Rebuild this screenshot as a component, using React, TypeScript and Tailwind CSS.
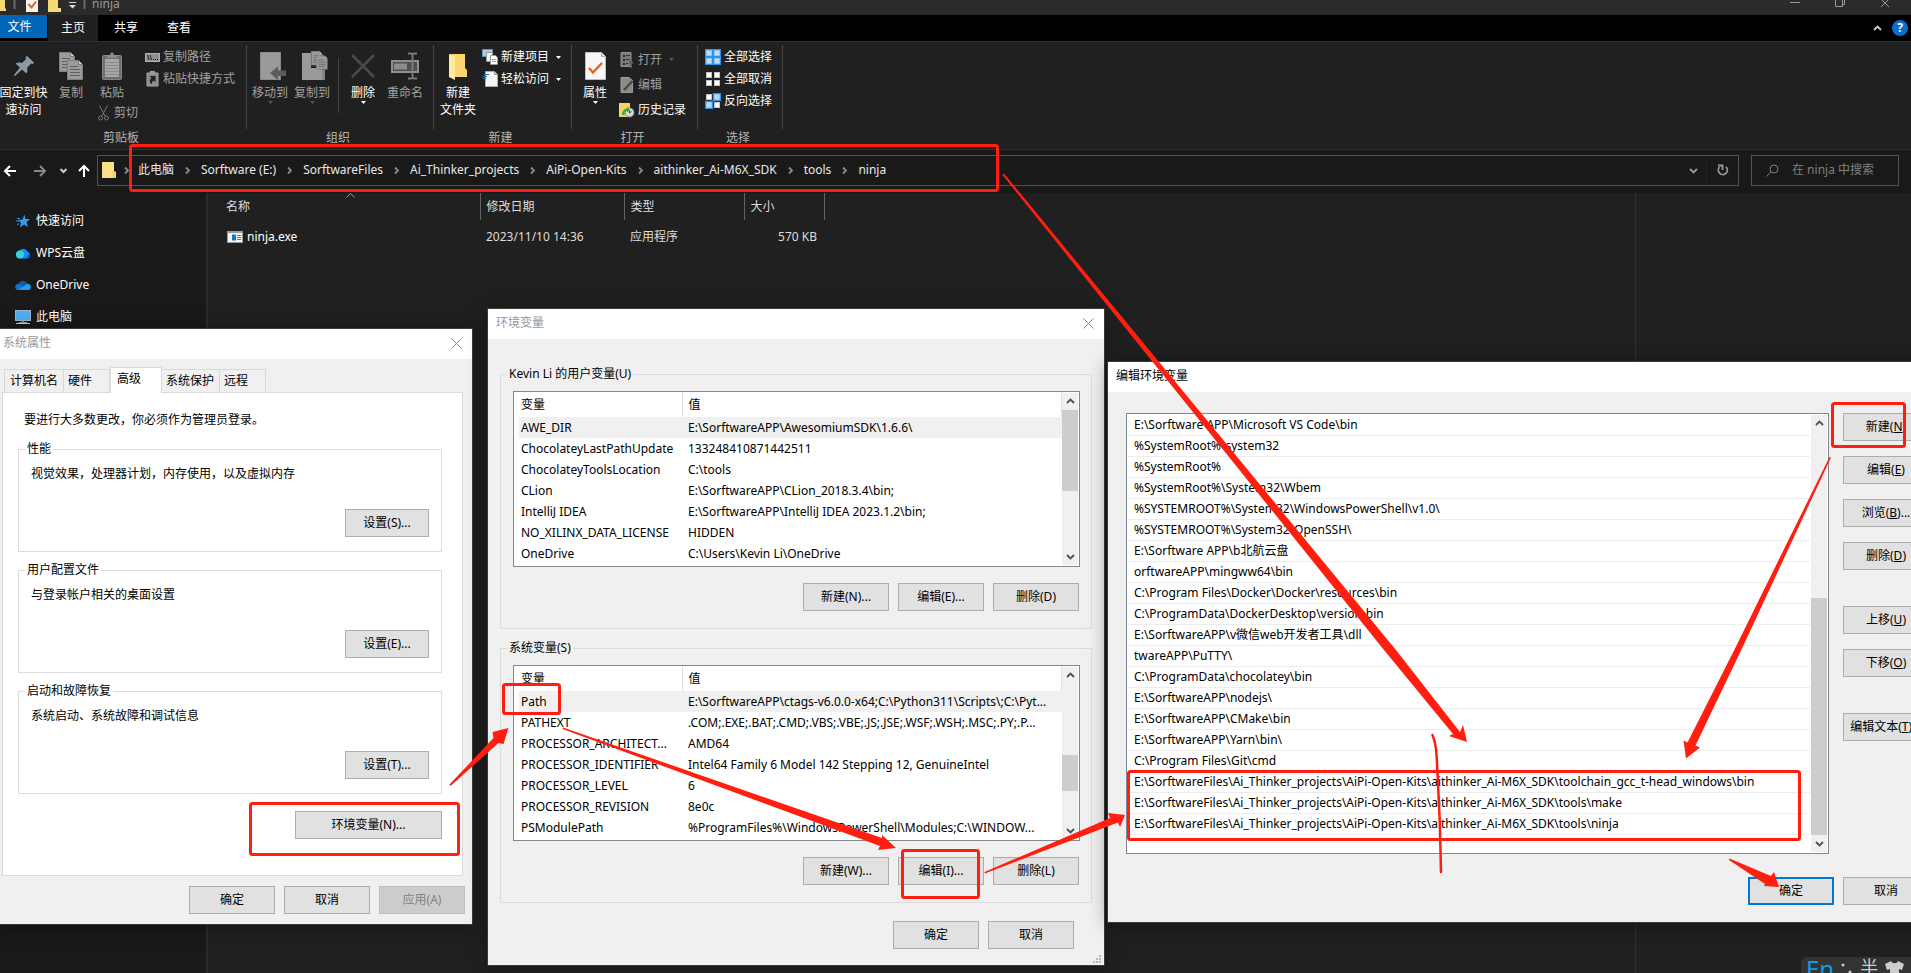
import type { ReactNode } from "react";

interface EnvVar {
  name: string;
  value: string;
}

const userVars: EnvVar[] = [
  { name: "AWE_DIR", value: "E:\\SorftwareAPP\\AwesomiumSDK\\1.6.6\\" },
  { name: "ChocolateyLastPathUpdate", value: "133248410871442511" },
  { name: "ChocolateyToolsLocation", value: "C:\\tools" },
  { name: "CLion", value: "E:\\SorftwareAPP\\CLion_2018.3.4\\bin;" },
  { name: "IntelliJ IDEA", value: "E:\\SorftwareAPP\\IntelliJ IDEA 2023.1.2\\bin;" },
  { name: "NO_XILINX_DATA_LICENSE", value: "HIDDEN" },
  { name: "OneDrive", value: "C:\\Users\\Kevin Li\\OneDrive" },
];

const systemVars: EnvVar[] = [
  { name: "Path", value: "E:\\SorftwareAPP\\ctags-v6.0.0-x64;C:\\Python311\\Scripts\\;C:\\Pyt..." },
  { name: "PATHEXT", value: ".COM;.EXE;.BAT;.CMD;.VBS;.VBE;.JS;.JSE;.WSF;.WSH;.MSC;.PY;.P..." },
  { name: "PROCESSOR_ARCHITECT...", value: "AMD64" },
  { name: "PROCESSOR_IDENTIFIER", value: "Intel64 Family 6 Model 142 Stepping 12, GenuineIntel" },
  { name: "PROCESSOR_LEVEL", value: "6" },
  { name: "PROCESSOR_REVISION", value: "8e0c" },
  { name: "PSModulePath", value: "%ProgramFiles%\\WindowsPowerShell\\Modules;C:\\WINDOW..." },
];

const pathEntries = [
  "E:\\Sorftware APP\\Microsoft VS Code\\bin",
  "%SystemRoot%\\system32",
  "%SystemRoot%",
  "%SystemRoot%\\System32\\Wbem",
  "%SYSTEMROOT%\\System32\\WindowsPowerShell\\v1.0\\",
  "%SYSTEMROOT%\\System32\\OpenSSH\\",
  "E:\\Sorftware APP\\b北航云盘",
  "orftwareAPP\\mingww64\\bin",
  "C:\\Program Files\\Docker\\Docker\\resources\\bin",
  "C:\\ProgramData\\DockerDesktop\\version-bin",
  "E:\\SorftwareAPP\\v微信web开发者工具\\dll",
  "twareAPP\\PuTTY\\",
  "C:\\ProgramData\\chocolatey\\bin",
  "E:\\SorftwareAPP\\nodejs\\",
  "E:\\SorftwareAPP\\CMake\\bin",
  "E:\\SorftwareAPP\\Yarn\\bin\\",
  "C:\\Program Files\\Git\\cmd",
  "E:\\SorftwareFiles\\Ai_Thinker_projects\\AiPi-Open-Kits\\aithinker_Ai-M6X_SDK\\toolchain_gcc_t-head_windows\\bin",
  "E:\\SorftwareFiles\\Ai_Thinker_projects\\AiPi-Open-Kits\\aithinker_Ai-M6X_SDK\\tools\\make",
  "E:\\SorftwareFiles\\Ai_Thinker_projects\\AiPi-Open-Kits\\aithinker_Ai-M6X_SDK\\tools\\ninja",
];

const crumbs = [
  "此电脑",
  "Sorftware (E:)",
  "SorftwareFiles",
  "Ai_Thinker_projects",
  "AiPi-Open-Kits",
  "aithinker_Ai-M6X_SDK",
  "tools",
  "ninja",
];

/* ---------- small glyphs ---------- */

function DownArrow({ className = "" }: { className?: string }) {
  return (
    <svg width="5" height="3" viewBox="0 0 5 3" className={className}>
      <path d="M0 0h5L2.5 3z" fill="currentColor" />
    </svg>
  );
}

function Chevron({ dir }: { dir: "up" | "down" | "right" }) {
  const d = { up: "M1 6l3.5-3.5L8 6", down: "M1 3l3.5 3.5L8 3", right: "M3 1.500l3 3-3 3" }[dir];
  return (
    <svg width="9" height="9" viewBox="0 0 9 9" fill="none" stroke="currentColor" strokeWidth="1.8">
      <path d={d} />
    </svg>
  );
}

function CloseX() {
  return (
    <svg width="11" height="11" viewBox="0 0 11 11" stroke="currentColor" fill="none">
      <path d="M.5.5l10 10M10.500.5l-10 10" />
    </svg>
  );
}

/* ---------- ribbon icons ---------- */

function PinIcon() {
  return (
    <svg width="22" height="22" viewBox="0 0 22 22" fill="#8e9aa3">
      <path d="M14 1l7 6.500-1 1.500-2-.5-4 4.500c.8 2 .5 4-.7 5.500L9 14.500 2 21l-1-.2.2-1L7 12.500 2.500 8.500C4.500 7.500 7 7 9 8l4-4-.5-2z" />
    </svg>
  );
}

function PageLines({ x, y }: { x: number; y: number }) {
  return (
    <g transform={`translate(${x} ${y})`}>
      <path d="M.5.5h11l4 4v15H.5z" fill="#9b9b9b" stroke="#7d7d7d" />
      <path d="M3 6.500h8M3 9.500h10M3 12.500h10M3 15.500h10" stroke="#5f5f5f" />
      <path d="M11.500.5v4h4" fill="#cfcfcf" stroke="#7d7d7d" />
    </g>
  );
}

function CopyIcon() {
  return (
    <svg width="24" height="28" viewBox="0 0 24 28">
      <PageLines x={0} y={0} />
      <PageLines x={8} y={8} />
    </svg>
  );
}

function PasteIcon() {
  return (
    <svg width="20" height="28" viewBox="0 0 20 28">
      <rect x=".5" y="3.500" width="19" height="24" rx="1" fill="#6e6e6e" stroke="#858585" />
      <rect x="3" y="7" width="14" height="18" fill="#a6a6a6" />
      <path d="M4 10.500h12M4 13.500h12M4 16.500h12M4 19.500h12M4 22.500h12" stroke="#8a8a8a" />
      <path d="M5 6V3h3l1-2.500h2L12 3h3v3z" fill="#8a8a8a" />
    </svg>
  );
}

function CutIcon() {
  return (
    <svg width="11" height="16" viewBox="0 0 11 16" fill="none" stroke="#777">
      <path d="M1.500.5L7 11M9.500.5L4 11" />
      <circle cx="2.500" cy="13" r="2" />
      <circle cx="8.500" cy="13" r="2" />
    </svg>
  );
}

function CopyPathIcon() {
  return (
    <svg width="15" height="9" viewBox="0 0 15 9">
      <rect x=".5" y=".5" width="14" height="8" fill="#8f8f8f" stroke="#b0b0b0" />
      <path d="M2.500 2l1.500 5M5 2l1.500 5" stroke="#222" />
      <path d="M8 6.500h1M10 6.500h1M12 6.500h1" stroke="#222" />
    </svg>
  );
}

function ShortcutIcon() {
  return (
    <svg width="13" height="16" viewBox="0 0 13 16">
      <path d="M1 2h11v13H1z" fill="#8b8b8b" stroke="#a5a5a5" />
      <rect x="4" y="0" width="5" height="3" fill="#9b9b9b" />
      <path d="M3.500 5h6v6L7.500 9.500C6 10.500 6 11.500 6 13 3 11.500 3.500 9 5.500 7z" fill="#222" />
    </svg>
  );
}

function MoveToIcon() {
  return (
    <svg width="32" height="28" viewBox="-6 0 32 28">
      <path d="M.5.5h20v27H.5z" fill="#9a9a9a" stroke="#8a8a8a" />
      <path d="M10 21l8-6.500v4h8v5.500h-8v4z" fill="#5c5c5c" />
    </svg>
  );
}

function CopyToIcon() {
  return (
    <svg width="32" height="30" viewBox="-6 0 32 30">
      <path d="M0 2h9v15h11v12H0z" fill="#9a9a9a" />
      <g transform="translate(9 0) scale(.72)">
        <PageLines x={0} y={0} />
        <PageLines x={7} y={6} />
      </g>
      <path d="M20 19h3v10h-3z" fill="#858585" />
    </svg>
  );
}

function DeleteIcon() {
  return (
    <svg width="24" height="28" viewBox="0 0 24 28" stroke="#4b4b4b" strokeWidth="2.500">
      <path d="M1 3l22 22M23 3L1 25" />
    </svg>
  );
}

function RenameIcon() {
  return (
    <svg width="28" height="28" viewBox="0 0 28 28" fill="none">
      <rect x="1" y="9" width="26" height="11" fill="#4f4f4f" stroke="#8e8e8e" strokeWidth="2" />
      <rect x="3" y="11.500" width="13" height="6" fill="#8e8e8e" />
      <path d="M17 1.500h2.500c1 0 2 .6 2 1.500v22c0 .9-1 1.500-2 1.500H17M26 1.500h-2.500c-1 0-2 .6-2 1.500M26 26.500h-2.500c-1 0-2-.6-2-1.500" stroke="#7c7c7c" strokeWidth="1.800" />
    </svg>
  );
}

function BigFolderIcon() {
  return (
    <svg width="18" height="28" viewBox="0 0 18 28">
      <path d="M1 2h15v14l2 2v7H5z" fill="#f9d76e" />
      <path d="M0 2l6 3v23l-6-3z" fill="#fde9a2" />
    </svg>
  );
}

function NewItemIcon() {
  return (
    <svg width="16" height="16" viewBox="0 0 16 16">
      <rect x=".5" y=".5" width="10" height="7" fill="#a9cfe8" stroke="#5b95b8" />
      <path d="M4.500 3.500h6v9h-6z" fill="#f2f2f2" stroke="#999" />
      <path d="M8.500 6.500h5l2 2v7h-7z" fill="#fff" stroke="#999" />
      <path d="M10 10.500h4M10 12.500h4" stroke="#b58fd0" />
    </svg>
  );
}

function EasyAccessIcon() {
  return (
    <svg width="16" height="16" viewBox="0 0 16 16">
      <path d="M3.500.5h9l3 3v12h-12z" fill="#f5f5f5" stroke="#aaa" />
      <path d="M2 3.500h5M0 5.500h5M1 7.500h3" stroke="#2f6fb3" />
      <path d="M12.500.5v3h3" fill="#ccc" stroke="#999" />
    </svg>
  );
}

function PropertiesIcon() {
  return (
    <svg width="21" height="28" viewBox="0 0 21 28">
      <path d="M.5.500h16l4 4v23H.5z" fill="#f7f7f7" stroke="#bdbdbd" />
      <path d="M16.500.5v4h4" fill="#ddd" stroke="#aaa" />
      <path d="M4 16l4 4.500 9-9.500" fill="none" stroke="#e8631c" strokeWidth="2.500" />
    </svg>
  );
}

function OpenIcon() {
  return (
    <svg width="14" height="16" viewBox="0 0 14 16">
      <path d="M1 .5h10v14H1z" fill="#7b7b7b" stroke="#8f8f8f" />
      <path d="M3 3h2v2H3zM3 7h2v2H3zM3 11h2v2H3z" fill="#2a2a2a" />
      <path d="M6 3.500h4M6 7.500h4M6 11.500h2" stroke="#333" />
      <path d="M11 8l3 3.500h-2V16h-2v-4.500H8z" fill="#5f5f5f" />
    </svg>
  );
}

function EditIcon() {
  return (
    <svg width="14" height="16" viewBox="0 0 14 16">
      <path d="M1 .5h8l3.500 3v12H1z" fill="#8a8a8a" stroke="#9d9d9d" />
      <path d="M4 13L12.500 4" stroke="#4a4a4a" strokeWidth="2.500" />
    </svg>
  );
}

function HistoryIcon() {
  return (
    <svg width="16" height="16" viewBox="0 0 16 16">
      <path d="M0 1h11v14H0z" fill="#f5d36b" />
      <circle cx="10.500" cy="10.500" r="4.500" fill="#d8d8d8" stroke="#888" />
      <path d="M10.500 8v3l2-1.500" stroke="#444" fill="none" />
      <path d="M3 13c0-4 2-6 5-6.500V5l3 3-3 2.500V9c-2 .3-2.500 2-2.500 4z" fill="#3caa3c" />
    </svg>
  );
}

/* four squares; each flag says whether that square is selected */
function SelectIcon({ on }: { on: boolean[] }) {
  const spots = [[0, 0], [8, 0], [0, 8], [8, 8]];
  return (
    <svg width="16" height="16" viewBox="0 0 16 16">
      {spots.map(([x, y], i) =>
        on[i] ? (
          <rect key={i} x={x + 0.5} y={y + 0.5} width="7" height="7" fill="#b5dcfa" stroke="#2f92e6" strokeWidth="1.500" />
        ) : (
          <rect key={i} x={x + 1.5} y={y + 1.5} width="5" height="5" fill="#fff" stroke="#c4c4c4" />
        )
      )}
    </svg>
  );
}

/* ---------- ribbon parts ---------- */

interface BigProps {
  icon: ReactNode;
  label: ReactNode;
  arrow?: boolean;
  dim?: boolean;
  wide?: boolean;
}

function BigButton({ icon, label, arrow, dim, wide }: BigProps) {
  return (
    <button className={`flex shrink-0 flex-col items-center whitespace-nowrap pt-2.5 leading-[17px] ${wide ? "w-[47px]" : "w-9"} ${dim ? "text-[#a0a0a0]" : "text-white"}`}>
      <span className="mb-1 flex h-7 items-center">{icon}</span>
      {label}
      {arrow && <DownArrow className={dim ? "text-[#555]" : "text-white"} />}
    </button>
  );
}

interface RowProps {
  icon: ReactNode;
  label: string;
  arrow?: boolean;
  dim?: boolean;
  tall?: boolean;
}

function RowButton({ icon, label, arrow, dim, tall }: RowProps) {
  return (
    <button className={`flex items-center gap-[3px] whitespace-nowrap ${tall ? "h-[25px]" : "h-[22px]"} ${dim ? "text-[#a0a0a0]" : "text-white"}`}>
      <span className="flex w-4 justify-center">{icon}</span>
      {label}
      {arrow && <DownArrow className={dim ? "ml-1 text-[#555]" : "ml-1"} />}
    </button>
  );
}

function RibbonGroup({ title, width, children }: { title: string; width: string; children: ReactNode }) {
  return (
    <section className={`flex shrink-0 ${width}`}>
      <div className="flex flex-1 flex-col">
        <div className="flex flex-1 items-start">{children}</div>
        <h2 className="h-[22px] pr-1 text-center leading-[22px] text-[#b4b4b4]">{title}</h2>
      </div>
      <div className="mt-[3px] h-[84px] w-px bg-[#454545]" />
    </section>
  );
}

function Ribbon() {
  return (
    <div className="flex h-[108px] overflow-hidden border-t border-[#2f2f2f] bg-[#202020]">
      <RibbonGroup title="剪贴板" width="w-[247px]">
        <BigButton wide icon={<PinIcon />} label={<>固定到快<br />速访问</>} />
        <div className="ml-1.5 flex">
          <BigButton dim icon={<CopyIcon />} label="复制" />
        </div>
        <div className="ml-[5px] flex w-[44px] flex-col">
          <BigButton dim icon={<PasteIcon />} label="粘贴" />
          <button className="ml-1 mt-1 flex h-4 items-center gap-[5px] whitespace-nowrap text-[#a0a0a0]">
            <CutIcon />
            剪切
          </button>
        </div>
        <div className="ml-1.5 pt-1">
          <RowButton dim icon={<CopyPathIcon />} label="复制路径" />
          <RowButton dim icon={<ShortcutIcon />} label="粘贴快捷方式" />
        </div>
      </RibbonGroup>
      <RibbonGroup title="组织" width="w-[187px]">
        <div className="flex gap-1.5 pl-[5px]">
          <BigButton dim arrow icon={<MoveToIcon />} label="移动到" />
          <BigButton dim arrow icon={<CopyToIcon />} label="复制到" />
          <div className="mt-4 h-[55px] w-[3px] border-r border-[#454545]" />
          <BigButton arrow icon={<DeleteIcon />} label="删除" />
          <BigButton dim icon={<RenameIcon />} label="重命名" />
        </div>
      </RibbonGroup>
      <RibbonGroup title="新建" width="w-[138px]">
        <div className="flex gap-1.5 pl-1.5">
          <BigButton icon={<BigFolderIcon />} label={<>新建<br />文件夹</>} />
          <div className="pt-1">
            <RowButton arrow icon={<NewItemIcon />} label="新建项目" />
            <RowButton arrow icon={<EasyAccessIcon />} label="轻松访问" />
          </div>
        </div>
      </RibbonGroup>
      <RibbonGroup title="打开" width="w-[126px]">
        <div className="flex gap-1.5 pl-[5px]">
          <BigButton arrow icon={<PropertiesIcon />} label="属性" />
          <div className="pt-[5px]">
            <RowButton tall dim arrow icon={<OpenIcon />} label="打开" />
            <RowButton tall dim icon={<EditIcon />} label="编辑" />
            <RowButton tall icon={<HistoryIcon />} label="历史记录" />
          </div>
        </div>
      </RibbonGroup>
      <RibbonGroup title="选择" width="w-[85px]">
        <div className="pl-[7px] pt-1">
          <RowButton icon={<SelectIcon on={[true, true, true, true]} />} label="全部选择" />
          <RowButton icon={<SelectIcon on={[false, false, false, false]} />} label="全部取消" />
          <RowButton icon={<SelectIcon on={[false, true, true, false]} />} label="反向选择" />
        </div>
      </RibbonGroup>
    </div>
  );
}

/* ---------- explorer ---------- */

function TitleBar() {
  return (
    <header className="flex h-[15px] items-start justify-between overflow-hidden bg-[#2b2b2b] text-[#999]">
      <div className="flex items-start">
        <svg width="90" height="12" viewBox="0 0 90 12">
          <path d="M0 0h5v8l1 1v2H0z" fill="#f5d978" />
          <path d="M14.500 0v9M84.500 0v9" stroke="#6a6a6a" strokeWidth="2" />
          <path d="M26 0h12v12H26z" fill="#f2f2f2" />
          <path d="M28.500 4l3 3.500 4.500-6" fill="none" stroke="#e8631c" strokeWidth="2" />
          <path d="M48 0h10v8h3v4H48z" fill="#f5d978" />
          <path d="M69 2.500h7" stroke="#ddd" />
          <path d="M69 5h7l-3.500 3.500z" fill="#ddd" />
        </svg>
        <span className="-mt-1 ml-0.5 leading-4">ninja</span>
      </div>
      <svg width="101" height="8" viewBox="0 0 101 8" className="mr-5" fill="none" stroke="#999">
        <path d="M0 2.500h10M45.500 0v6.500h7V0M52.500 4.500h2V0M91 7l8-8M91-1l8 8" />
      </svg>
    </header>
  );
}

function TabBar() {
  return (
    <div className="flex h-[26px] items-start bg-black text-white">
      <button className="h-[23px] w-[47px] bg-[#0067b8] pr-2 leading-[23px]">文件</button>
      <button className="ml-px h-[26px] w-[50px] bg-[#202020]">主页</button>
      <button className="ml-px h-[26px] w-[54px]">共享</button>
      <button className="h-[26px] w-[52px]">查看</button>
      <div className="ml-auto flex h-[26px] items-center gap-2.5 pr-[3px] text-[#ccc]">
        <Chevron dir="up" />
        <span className="flex size-4 items-center justify-center rounded-full bg-[#0a6cce] font-bold text-white">?</span>
      </div>
    </div>
  );
}

function AddressBar() {
  return (
    <div className="flex h-11 items-center border-t border-[#2f2f2f] bg-[#191919] pb-0.5 pl-1 pr-3">
      <svg width="93" height="14" viewBox="0 0 93 14" fill="none" strokeWidth="2" className="shrink-0">
        <path d="M12 7H1M6 2L1 7l5 5" stroke="#fff" />
        <path d="M30 7h11M36 2l5 5-5 5" stroke="#888" />
        <path d="M56.500 5l3 3 3-3" stroke="#ccc" />
        <path d="M80 13V2M75 7l5-5 5 5" stroke="#fff" />
      </svg>
      <nav className="flex h-[31px] flex-1 items-center border border-[#535353] pb-px text-[#e8e8e8]">
        <svg width="14" height="16" viewBox="0 0 14 16" className="ml-1">
          <path d="M0 0h12v9l2 1v6H0z" fill="#fbdf86" />
          <path d="M12 9v7" stroke="#e5b73e" />
        </svg>
        <span className="flex w-5 justify-center text-[#8a8a8a]"><Chevron dir="right" /></span>
        <ol className="ml-0.5 flex items-center">
          {crumbs.map((c, i) => (
            <li key={c} className="flex items-center whitespace-nowrap">
              {i > 0 && <span className="flex w-[27px] justify-center text-[#8a8a8a]"><Chevron dir="right" /></span>}
              <a href="#">{c}</a>
            </li>
          ))}
        </ol>
        <div className="ml-auto flex h-full items-center text-[#999]">
          <Chevron dir="down" />
          <button className="ml-2 flex h-full w-8 items-center justify-center border-l border-[#222]" aria-label="刷新">
            <svg width="12" height="12" viewBox="0 0 12 12" fill="none" stroke="currentColor" strokeWidth="1.800">
              <path d="M2.500 3A4.500 4.500 0 1 0 9 2.800" />
              <path d="M1 1.500h4.500V6" />
            </svg>
          </button>
        </div>
      </nav>
      <label className="ml-3 flex h-[31px] w-[148px] items-center border border-[#535353] pb-px pl-3.5 text-[#808080]">
        <svg width="13" height="13" viewBox="0 0 13 13" fill="none" stroke="currentColor" className="mr-[13px] shrink-0">
          <circle cx="8" cy="5" r="4" />
          <path d="M5 8l-4.500 4.500" />
        </svg>
        <input type="search" aria-label="搜索" placeholder="在 ninja 中搜索" className="w-full min-w-0 bg-transparent outline-none placeholder:text-[#808080]" />
      </label>
    </div>
  );
}

const places: { label: string; icon: ReactNode }[] = [
  {
    label: "快速访问",
    icon: (
      <svg width="16" height="16" viewBox="0 0 16 16">
        <path d="M9.500 1.500l1 4.500h4.500l-3.500 3 1.500 5-4-2.500-4 3 1-5L3 7l4.500-.5z" fill="#2f9cf0" />
        <path d="M2 5.500h3M1 8h3M2 12l2-1.500" stroke="#2f9cf0" />
      </svg>
    ),
  },
  {
    label: "WPS云盘",
    icon: (
      <svg width="16" height="16" viewBox="0 0 16 16">
        <path d="M4 13.500a4 4 0 0 1 .5-7.800A5 5 0 0 1 13 7c3 .8 2.500 6.500-1 6.500z" fill="#1a8df5" />
        <circle cx="5" cy="9.500" r="4" fill="#2fd5d0" />
        <path d="M9 13.500c3-1 4-3 5-5 2 2 1 5-2 5z" fill="#1256e0" />
      </svg>
    ),
  },
  {
    label: "OneDrive",
    icon: (
      <svg width="16" height="16" viewBox="0 0 16 16">
        <path d="M3.500 7.500a4.500 4.500 0 0 1 8.500-1l-4 4z" fill="#0a5bb0" />
        <path d="M3 13a3 3 0 0 1 .5-6c2 0 3 1 5 2.500L6 13z" fill="#1173cf" />
        <path d="M12 6.500c5 .3 5 6.500 1 6.500H3.500L9 9z" fill="#2a9bea" />
      </svg>
    ),
  },
  {
    label: "此电脑",
    icon: (
      <svg width="16" height="16" viewBox="0 0 16 16">
        <rect x=".5" y="1.500" width="15" height="10" fill="#4db0f2" stroke="#9fb4c4" />
        <path d="M8 11.500v2M1 14.500h14" stroke="#c3ccd3" />
        <path d="M4 13.500h8" stroke="#8fa0ad" />
      </svg>
    ),
  },
];

function Explorer() {
  return (
    <div className="flex h-screen flex-col">
      <TitleBar />
      <TabBar />
      <Ribbon />
      <AddressBar />
      <div className="flex flex-1 bg-[#202020] text-[#ddd]">
        <ul className="w-[206px] shrink-0 bg-[#191919] pl-[15px] pt-3 text-white">
          {places.map((p) => (
            <li key={p.label} className="flex h-8 items-center gap-[5px]">
              {p.icon}
              {p.label}
            </li>
          ))}
        </ul>
        <main className="flex-1 border-l-2 border-[#2b2b2b]">
          <table className="w-[616px] table-fixed">
            <thead>
              <tr className="h-[27px] text-left">
                <th className="relative w-[272px] border-r border-[#636363] pl-[18px] font-normal">
                  名称
                  <svg width="9" height="5" viewBox="0 0 9 5" className="absolute left-[138px] top-0" fill="none" stroke="#999">
                    <path d="M.5 4.500l4-4 4 4" />
                  </svg>
                </th>
                <th className="w-36 border-r border-[#636363] pl-1.5 font-normal">修改日期</th>
                <th className="w-[120px] border-r border-[#636363] pl-1.5 font-normal">类型</th>
                <th className="w-20 border-r border-[#636363] pl-1.5 font-normal">大小</th>
              </tr>
            </thead>
            <tbody>
              <tr className="h-[34px]">
                <td className="pl-[19px] text-white">
                  <span className="flex items-center gap-1">
                    <svg width="16" height="12" viewBox="0 0 16 12">
                      <path d="M0 0h16v12H0z" fill="#9a9a9a" />
                      <path d="M1 2h14v9H1z" fill="#f4f4f4" />
                      <path d="M5 3.500h4v6H5z" fill="#0f78d4" />
                      <path d="M10 4.500h4M10 6.500h4M10 8.500h4" stroke="#777" />
                    </svg>
                    ninja.exe
                  </span>
                </td>
                <td className="pl-1.5">2023/11/10 14:36</td>
                <td className="pl-1.5">应用程序</td>
                <td className="pr-[7px] text-right">570 KB</td>
              </tr>
            </tbody>
          </table>
        </main>
        <aside className="w-[276px] border-l border-[#2f2f2f]" />
      </div>
    </div>
  );
}

/* ---------- dialogs ---------- */

function Dialog({ title, place, active, children }: { title: string; place: string; active?: boolean; children: ReactNode }) {
  return (
    <section className={`absolute flex flex-col bg-[#f0f0f0] text-black shadow-[0_2px_18px_rgba(0,0,0,0.4)] outline-1 outline-[#3a3a3a] ${place}`}>
      <header className="flex h-[30px] shrink-0 items-center justify-between bg-white px-2 pb-0.5">
        <h1 className={active ? "text-black" : "text-[#999]"}>{title}</h1>
        {!active && (
          <button aria-label="关闭" className="mr-0.5 text-[#888]">
            <CloseX />
          </button>
        )}
      </header>
      {children}
    </section>
  );
}

interface PushProps {
  children: ReactNode;
  width?: string;
  primary?: boolean;
  disabled?: boolean;
}

function PushButton({ children, width = "w-[86px]", primary, disabled }: PushProps) {
  let cls = "border border-[#adadad] bg-[#e1e1e1]";
  if (primary) cls = "border-2 border-[#0078d7] bg-[#e1e1e1]";
  if (disabled) cls = "border border-[#bfbfbf] bg-[#cccccc] text-[#838383]";
  return (
    <button disabled={disabled} className={`flex h-7 shrink-0 items-center justify-center whitespace-nowrap pb-px ${width} ${cls}`}>
      <span>{children}</span>
    </button>
  );
}

function ScrollBar({ thumb }: { thumb: string }) {
  return (
    <div className="my-px mr-px flex w-4 shrink-0 flex-col items-center bg-[#f0f0f0] text-[#505050]">
      <span className="flex h-[17px] items-center"><Chevron dir="up" /></span>
      <div className={`w-full bg-[#cdcdcd] ${thumb}`} />
      <span className="mt-auto flex h-[17px] items-center"><Chevron dir="down" /></span>
    </div>
  );
}

function SettingsBox({ title, text, hotkey }: { title: string; text: string; hotkey: string }) {
  return (
    <fieldset className="border border-[#dcdcdc] pb-3.5 pl-3 pr-3">
      <legend className="-ml-1.5 px-0.5">{title}</legend>
      <p className="mt-[9px]">{text}</p>
      <div className="mt-[27px] flex justify-end">
        <PushButton width="w-[84px]">设置({hotkey})...</PushButton>
      </div>
    </fieldset>
  );
}

const sysTabs = [
  { label: "计算机名", width: "w-[60px]" },
  { label: "硬件", width: "w-[46px]" },
  { label: "高级", width: "w-[52px]" },
  { label: "系统保护", width: "w-[58px]" },
  { label: "远程", width: "w-[46px]" },
];

function SystemProperties() {
  return (
    <section className="absolute left-0 top-[329px] w-[472px] bg-[#f0f0f0] pb-2.5 text-black shadow-[0_2px_18px_rgba(0,0,0,0.4)] outline-1 outline-[#3a3a3a]">
      <header className="flex h-[30px] items-center justify-between bg-white pb-0.5 pl-[3px] pr-2.5">
        <h1 className="text-[#999]">系统属性</h1>
        <button aria-label="关闭" className="text-[#888]"><CloseX /></button>
      </header>
      <div className="mt-2 flex items-end pl-1">
        {sysTabs.map((t) =>
          t.label === "高级" ? (
            <button key={t.label} className={`relative -mb-px h-[26px] border border-b-0 border-[#d9d9d9] bg-white pb-1 pl-1.5 text-left ${t.width}`}>
              {t.label}
            </button>
          ) : (
            <button key={t.label} className={`h-[23px] whitespace-nowrap border border-b-0 border-l-0 border-[#d9d9d9] pl-1 text-left first:border-l first:pl-[5px] ${t.width}`}>
              {t.label}
            </button>
          )
        )}
      </div>
      <div className="ml-0.5 mr-[9px] border border-[#d9d9d9] bg-white pb-9 pl-[15px] pr-5 pt-[19px]">
        <p className="pl-1.5">要进行大多数更改，你必须作为管理员登录。</p>
        <div className="mt-[13px] flex flex-col gap-2.5">
          <SettingsBox title="性能" text="视觉效果，处理器计划，内存使用，以及虚拟内存" hotkey="S" />
          <SettingsBox title="用户配置文件" text="与登录帐户相关的桌面设置" hotkey="E" />
          <SettingsBox title="启动和故障恢复" text="系统启动、系统故障和调试信息" hotkey="T" />
        </div>
        <div className="mt-[17px] flex justify-end">
          <PushButton width="w-[147px]">环境变量(N)...</PushButton>
        </div>
      </div>
      <div className="mt-2.5 flex justify-end gap-[9px] pr-[7px]">
        <PushButton>确定</PushButton>
        <PushButton>取消</PushButton>
        <PushButton disabled>应用(A)</PushButton>
      </div>
    </section>
  );
}

function VarBox({ title, vars, thumb, keys }: { title: string; vars: EnvVar[]; thumb: string; keys: string[] }) {
  return (
    <fieldset className="mx-3 border border-[#dcdcdc] pb-[17px] pl-3 pr-[11px]">
      <legend className="-ml-1.5 px-0.5">{title}</legend>
      <div className="mt-[9px] flex h-44 overflow-hidden border border-[#828790] bg-white pl-[5px]">
        <div className="flex-1">
          <table className="w-full table-fixed whitespace-nowrap">
            <thead>
              <tr className="h-[25px] text-left">
                <th className="w-[163px] border-r border-[#e0e0e0] pl-0.5 font-normal">变量</th>
                <th className="border-r border-[#e0e0e0] pl-1.5 font-normal">值</th>
              </tr>
            </thead>
            <tbody>
              {vars.map((v, i) => (
                <tr key={v.name} className={i === 0 ? "h-[21px] bg-[#f0f0f0]" : "h-[21px]"}>
                  <td className="pl-0.5">{v.name}</td>
                  <td className="pl-1.5">{v.value}</td>
                </tr>
              ))}
            </tbody>
          </table>
        </div>
        <ScrollBar thumb={thumb} />
      </div>
      <div className="mt-4 flex justify-end gap-[9px] pr-px">
        {keys.map((k) => (
          <PushButton key={k}>{k}</PushButton>
        ))}
      </div>
    </fieldset>
  );
}

function EnvironmentVariables() {
  return (
    <Dialog title="环境变量" place="left-[488px] top-[309px] w-[616px]">
      <div className="flex flex-col gap-[11px] pt-[27px]">
        <VarBox title="Kevin Li 的用户变量(U)" vars={userVars} thumb="h-[81px]" keys={["新建(N)...", "编辑(E)...", "删除(D)"]} />
        <VarBox title="系统变量(S)" vars={systemVars} thumb="mt-[71px] h-9" keys={["新建(W)...", "编辑(I)...", "删除(L)"]} />
      </div>
      <div className="mt-[18px] flex justify-end gap-[9px] pb-4 pr-[30px]">
        <PushButton>确定</PushButton>
        <PushButton>取消</PushButton>
      </div>
      <svg width="8" height="8" viewBox="0 0 8 8" fill="#b5b5b5" className="absolute bottom-0.5 right-[3px]">
        <path d="M6 0h2v2H6zM3 3h2v2H3zM6 3h2v2H6zM0 6h2v2H0zM3 6h2v2H3zM6 6h2v2H6z" />
      </svg>
    </Dialog>
  );
}

function EditPath() {
  return (
    <Dialog active title="编辑环境变量" place="left-[1108px] top-[362px] w-[836px]">
      <div className="flex pl-[18px] pt-[21px]">
        <div className="flex h-[441px] w-[703px] border border-[#828790] bg-white">
          <ul className="flex-1 whitespace-nowrap px-px pt-px">
            {pathEntries.map((p) => (
              <li key={p} className="h-[21px] border-b border-[#ededed] pl-1.5 leading-5">{p}</li>
            ))}
          </ul>
          <ScrollBar thumb="mt-[166px] h-[238px]" />
        </div>
        <div className="ml-3.5 flex flex-col gap-9">
          <div className="flex flex-col gap-[15px]">
            <PushButton>新建(<u>N</u>)</PushButton>
            <PushButton>编辑(<u>E</u>)</PushButton>
            <PushButton>浏览(<u>B</u>)...</PushButton>
            <PushButton>删除(<u>D</u>)</PushButton>
          </div>
          <div className="flex flex-col gap-[15px]">
            <PushButton>上移(<u>U</u>)</PushButton>
            <PushButton>下移(<u>O</u>)</PushButton>
          </div>
          <PushButton>编辑文本(<u>T</u>)...</PushButton>
        </div>
      </div>
      <div className="mt-[23px] flex justify-end gap-[9px] pb-[17px] pr-[15px]">
        <PushButton primary>确定</PushButton>
        <PushButton>取消</PushButton>
      </div>
    </Dialog>
  );
}

function ImeBar() {
  return (
    <div className="absolute -bottom-3 right-0 flex h-7 w-[110px] items-start overflow-hidden rounded-tl-md bg-[#333] pl-[5px] text-[#ccc]">
      <span className="text-2xl leading-6 text-[#0f9be8]">En</span>
      <svg width="76" height="22" viewBox="0 0 76 22" fill="#ccc" className="absolute left-[34px] top-0">
        <circle cx="8" cy="8" r="1.500" />
        <circle cx="15" cy="15" r="1.500" />
        <path d="M50 7l6-3c1 3 6 3 7 0l6 3-2 6-3-1v10h-9V12l-3 1z" />
      </svg>
      <span className="ml-[26px] text-lg leading-5">半</span>
    </div>
  );
}

/* red marker boxes and arrows drawn over the windows */
function Annotations() {
  return (
    <svg width="1911" height="973" viewBox="0 0 1911 973" className="pointer-events-none absolute left-0 top-0" fill="none" stroke="#ff1e10" strokeWidth="3">
      <rect x="130.500" y="145.500" width="867" height="45" rx="2" />
      <rect x="250.500" y="803.500" width="208" height="51" rx="2" />
      <rect x="503.500" y="684.500" width="56" height="29" rx="2" />
      <rect x="902.500" y="850.500" width="76" height="47" rx="2" />
      <rect x="1832.500" y="403.500" width="72" height="43" rx="2" />
      <rect x="1128.500" y="771.500" width="671" height="68" rx="2" />
      <path d="M1432.500 735c4 9 4 18 5 38 2 35 3 60 3.500 99" strokeWidth="2.500" strokeLinecap="round" />
      <g fill="#ff1e10" stroke="none">
        <path d="M1002.500 175l1.500-1.500L1396 650l64 82 3-7 4 17-18-6 4-2-69-84z" />
        <path d="M1829.500 457l1.500.500-89.500 192-46 96 4.500 2-14 11-2.500-18 4 2 47.500-94z" />
        <path d="M449.500 784.500l1 1.500 48-43 5 1 5-16-16 4 1 6z" />
        <path d="M563 727.500l-.5 1.500L880 846l-2 4 18-2-14-13v3z" />
        <path d="M984.500 872l.5 1.500 133-51 2 4.500 5-12-17-2 2 5z" />
        <path d="M1729.500 858.500l-.5 1.500 36 24-1 2 15 1-5-15-3 4z" />
      </g>
    </svg>
  );
}

export default function App() {
  return (
    <div className="relative h-screen overflow-hidden bg-[#202020] font-['Noto_Sans','Noto_Sans_CJK_SC',sans-serif] text-xs">
      <Explorer />
      <SystemProperties />
      <EnvironmentVariables />
      <EditPath />
      <ImeBar />
      <Annotations />
    </div>
  );
}
